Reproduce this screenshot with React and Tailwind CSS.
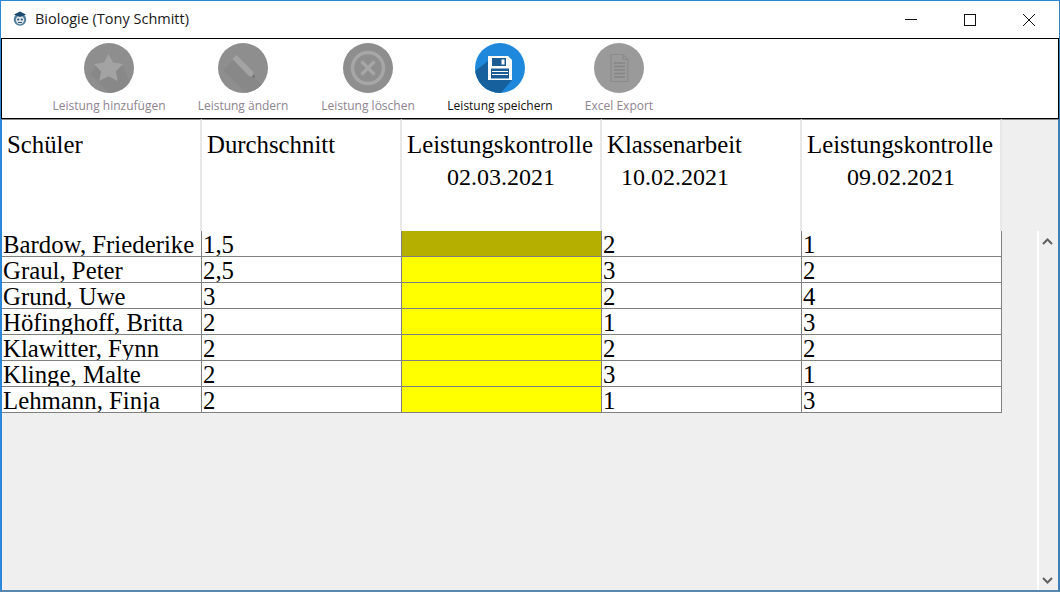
function Circle({ color, children }) {
  return (
    <svg width="50" height="50" viewBox="0 0 50 50" className="block">
      <clipPath id={"clip" + color.slice(1)}>
        <circle cx="25" cy="25" r="25" />
      </clipPath>
      <circle cx="25" cy="25" r="25" fill={color} />
      <g clipPath={"url(#clip" + color.slice(1) + ")"}>{children}</g>
    </svg>
  );
}

const StarIcon = () => (
  <svg width="50" height="50" viewBox="0 0 50 50" className="block">
    <clipPath id="clipStar"><circle cx="25" cy="25" r="25" /></clipPath>
    <circle cx="25" cy="25" r="25" fill="#8e8e8e" />
    <path d="M11 23 L7 32 L27 52 L50 50 L39 23 Z" fill="#888888" clipPath="url(#clipStar)" />
    <path d="M24.5 11 L29 19.5 L39 21 L31.8 28.5 L33.8 38 L24.5 33.3 L15.2 38 L17.2 28.5 L10 21 L20 19.5 Z" fill="#a3a3a3" />
  </svg>
);
const PencilIcon = () => (
  <svg width="50" height="50" viewBox="0 0 50 50" className="block">
    <clipPath id="clipPen"><circle cx="25" cy="25" r="25" /></clipPath>
    <circle cx="25" cy="25" r="25" fill="#8e8e8e" />
    <path d="M15 17 L5 27 L30 52 L50 45 L36 35 Z" fill="#888888" clipPath="url(#clipPen)" />
    <path d="M14.5 16 L18.5 12 L35 28.5 L37 35 L31 33 Z" fill="#a3a3a3" />
    <path d="M33.5 34 L37 35 L36 31 Z" fill="#6f6f6f" />
  </svg>
);
const CrossIcon = () => (
  <Circle color="#8e8e8e">
    <circle cx="25" cy="25" r="15.5" fill="none" stroke="#a6a6a6" strokeWidth="3.5" />
    <path d="M18.5 18.5 L31.5 31.5 M31.5 18.5 L18.5 31.5" stroke="#a6a6a6" strokeWidth="3.2" />
  </Circle>
);
const SaveIcon = () => (
  <Circle color="#1e88dc">
    <path d="M13 18 L0 28 L0 50 L26 50 L37 37 Z" fill="#17609e" />
    <path d="M13 13 H33 L37 17 V37 H13 Z" fill="#ffffff" />
    <rect x="17" y="15" width="14" height="8" fill="#1d5c92" />
    <rect x="26.5" y="16.5" width="3" height="5" fill="#ffffff" />
    <rect x="16" y="25.5" width="18" height="10" fill="#1d5c92" />
    <path d="M17 28.5 H33 M17 31.5 H33" stroke="#ffffff" strokeWidth="1.2" />
  </Circle>
);
const DocIcon = () => (
  <Circle color="#9a9a9a">
    <path d="M17 11.5 H29 L34 16.5 V38.5 H17 Z" fill="none" stroke="#8b8b8b" strokeWidth="1.2" />
    <path d="M29 11.5 V16.5 H34" fill="none" stroke="#8b8b8b" strokeWidth="1.2" />
    <path d="M20 20 H31 M20 23.5 H31 M20 27 H31 M20 30.5 H31 M20 34 H31" stroke="#858585" strokeWidth="1.3" />
  </Circle>
);

const tools = [
  { label: "Leistung hinzufügen", w: "w-[114px]", icon: <StarIcon />, on: false },
  { label: "Leistung ändern", w: "w-[90px]", icon: <PencilIcon />, on: false },
  { label: "Leistung löschen", w: "w-[96px]", icon: <CrossIcon />, on: false },
  { label: "Leistung speichern", w: "w-[104px]", icon: <SaveIcon />, on: true },
  { label: "Excel Export", w: "w-[70px]", icon: <DocIcon />, on: false },
];

const rows = [
  ["Bardow, Friederike", "1,5", "2", "1"],
  ["Graul, Peter", "2,5", "3", "2"],
  ["Grund, Uwe", "3", "2", "4"],
  ["Höfinghoff, Britta", "2", "1", "3"],
  ["Klawitter, Fynn", "2", "2", "2"],
  ["Klinge, Malte", "2", "3", "1"],
  ["Lehmann, Finja", "2", "1", "3"],
];

function Head({ title, date, indent }) {
  return (
    <div className="w-[200px] h-[112px] shrink-0 bg-white border-t border-t-[#8a8a8a] border-r-2 border-r-[#e8e8e8] pt-[8px] pl-[5px] leading-[33px]">
      <div className="whitespace-nowrap">{title}</div>
      {date && <div className={`${indent} text-[24px] whitespace-nowrap`}>{date}</div>}
    </div>
  );
}

function Cell({ children, tone }) {
  return (
    <div className={`w-[200px] h-[26px] shrink-0 border-r border-b border-[#808080] pl-[1px] leading-[27px] whitespace-nowrap overflow-hidden ${tone || "bg-white"}`}>
      {children}
    </div>
  );
}

export default function App() {
  return (
    <div className="w-[1060px] h-[592px] overflow-hidden flex flex-col bg-[#efefef] border-l border-r border-t border-b-2 border-l-[#2b88d8] border-r-[#3d7fb8] border-t-[#2b88d8] border-b-[#5a87ad] font-['Liberation_Serif',serif] text-[24.8px] text-black">
      <div className="h-[37px] shrink-0 bg-white flex items-center">
        <svg width="16" height="16" viewBox="0 0 16 16" className="ml-[11px] mb-[3px]">
          <circle cx="8" cy="9.5" r="6.2" fill="#4f7d9c" />
          <circle cx="8" cy="10" r="4.2" fill="#d8e2e8" />
          <path d="M2 4.5 L8 1.5 L14 4.5 L8 7 Z" fill="#1c4a6e" />
          <circle cx="6.2" cy="9.5" r="1.1" fill="#35586f" />
          <circle cx="9.8" cy="9.5" r="1.1" fill="#35586f" />
          <path d="M6 12.5 H10" stroke="#35586f" strokeWidth="1" />
        </svg>
        <span className="ml-[7px] mb-[1px] font-['Open_Sans',sans-serif] text-[14.5px] text-[#1a1a1a] whitespace-nowrap">Biologie (Tony Schmitt)</span>
        <div className="ml-auto flex items-center h-full">
          <svg width="46" height="37" viewBox="0 0 46 37" className="mr-[13px]">
            <path d="M17 18.5 H29" stroke="#111" strokeWidth="1" />
          </svg>
          <svg width="46" height="37" viewBox="0 0 46 37" className="mr-[13px]">
            <rect x="17.5" y="13.5" width="11" height="11" fill="none" stroke="#111" strokeWidth="1" />
          </svg>
          <svg width="46" height="37" viewBox="0 0 46 37" className="mr-[7px]">
            <path d="M17 13 L29 25 M29 13 L17 25" stroke="#111" strokeWidth="1" />
          </svg>
        </div>
      </div>

      <div className="h-[81px] shrink-0 bg-white border border-black flex gap-8 pl-[50px] pt-[4px] font-['Open_Sans',sans-serif] text-[12px]">
        {tools.map((t) => (
          <div key={t.label} className={`${t.w} shrink-0 flex flex-col items-center`}>
            {t.icon}
            <span className={`mt-[5px] leading-[16px] whitespace-nowrap ${t.on ? "text-[#111]" : "text-[#8d8490]"}`}>{t.label}</span>
          </div>
        ))}
      </div>

      <div className="flex-1 min-h-0 flex border-l border-r border-l-[#2b88d8] border-r-[#3d7fb8]">
        <div className="w-[1000px] shrink-0 flex flex-col">
          <div className="flex">
            <Head title="Schüler" />
            <Head title="Durchschnitt" />
            <Head title="Leistungskontrolle" date="02.03.2021" indent="pl-[40px]" />
            <Head title="Klassenarbeit" date="10.02.2021" indent="pl-[14px]" />
            <Head title="Leistungskontrolle" date="09.02.2021" indent="pl-[40px]" />
          </div>
          {rows.map((r, i) => (
            <div key={r[0]} className="flex">
              <Cell>{r[0]}</Cell>
              <Cell>{r[1]}</Cell>
              <Cell tone={i === 0 ? "bg-[#b5b000]" : "bg-[#ffff00]"} />
              <Cell>{r[2]}</Cell>
              <Cell>{r[3]}</Cell>
            </div>
          ))}
        </div>
        <div className="flex-1 flex flex-col">
          <div className="h-px bg-[#8a8a8a]" />
        </div>
        <div className="w-[21px] shrink-0 flex flex-col">
          <div className="h-px shrink-0 bg-[#8a8a8a]" />
          <div className="flex-1 mt-[111px] border-l-2 border-white flex flex-col items-center justify-between pt-[7px] pb-[6px] pr-[2px]">
            <svg width="11" height="7" viewBox="0 0 11 7"><path d="M1 6 L5.5 1.5 L10 6" fill="none" stroke="#606060" strokeWidth="2" /></svg>
            <svg width="11" height="7" viewBox="0 0 11 7"><path d="M1 1 L5.5 5.5 L10 1" fill="none" stroke="#606060" strokeWidth="2" /></svg>
          </div>
        </div>
      </div>
    </div>
  );
}
